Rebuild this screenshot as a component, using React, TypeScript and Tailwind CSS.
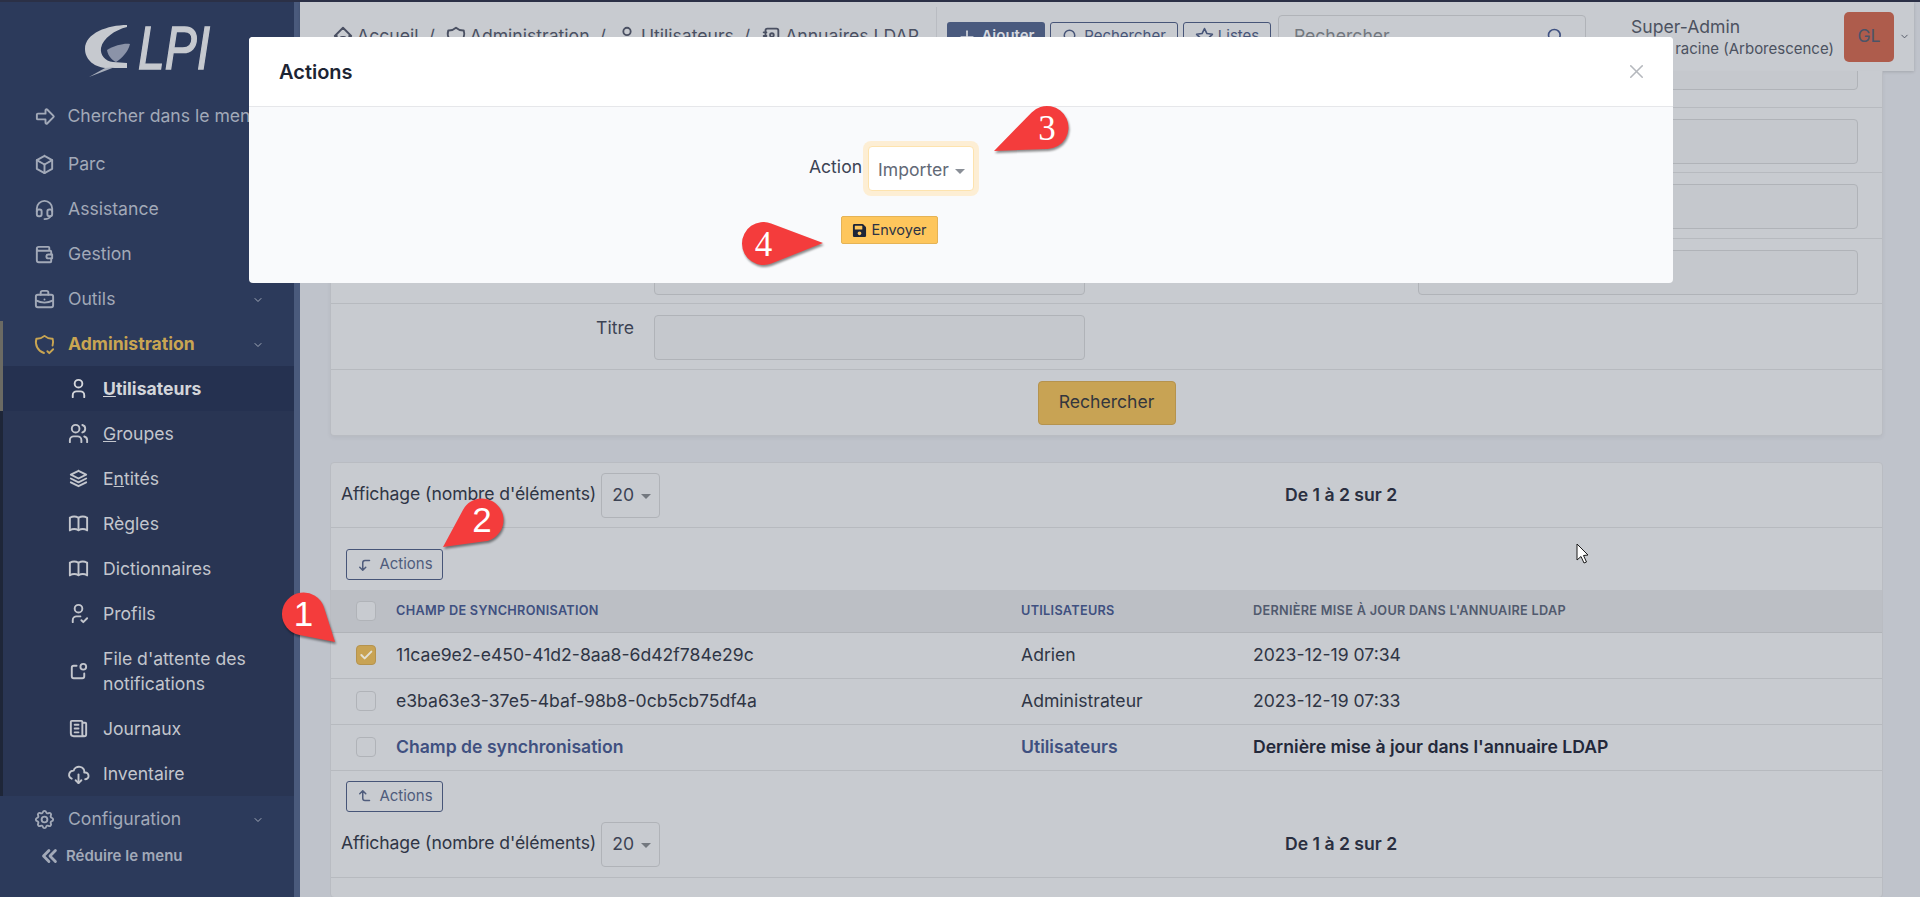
import React from 'react';
import {
  TbAddressBook,
  TbArrowBigRight,
  TbBook,
  TbBox,
  TbBriefcase,
  TbCheck,
  TbChevronDown,
  TbChevronsLeft,
  TbCloudDownload,
  TbCornerLeftDown,
  TbCornerLeftUp,
  TbHeadset,
  TbHome,
  TbNews,
  TbNotification,
  TbPlus,
  TbSearch,
  TbSettings,
  TbShieldCheck,
  TbStack2,
  TbStar,
  TbUser,
  TbUserCheck,
  TbUsers,
  TbWallet,
  TbX
} from 'react-icons/tb';
import { FaSave } from 'react-icons/fa';

type IconType = React.ComponentType<{ className?: string }>;

function Logo() {
  return (
    <svg
      viewBox="0 0 294 91"
      className="h-[91px] w-[294px] shrink-0">
      <path
        d="M127 23 C108 23 85 31 85 47 C85 58 95 66 108 66 L127 66 L127 61 L113 60 C105 59 100 53 101 46 C103 36 115 28 127 25 Z"
        fill="#c6c9cf"
      />
      <path
        d="M107 48 C115 43 125 41 130 42 C128 50 122 56 116 60 C112 58 108 54 107 48 Z"
        fill="#8b93a8"
      />
      <path
        d="M89 75 L115 65 L105 66 Z"
        fill="#a8aebb"
      />
      <text
        x="138"
        y="67"
        fontFamily="Liberation Sans, sans-serif"
        fontStyle="italic"
        fontSize="62"
        fill="#c6c9cf"
        stroke="#c6c9cf"
        strokeWidth="1.5"
        textLength="72"
        lengthAdjust="spacingAndGlyphs">
        LPI
      </text>
    </svg>
  );
}

function MenuItem({ icon: Icon, label, chevron, active }: { icon: IconType; label: string; chevron?: boolean; active?: boolean }) {
  return (
    <div className="flex h-[45px] items-center pl-[33px] pr-[30px] pt-[2px]">
      <Icon className={`size-[23px] shrink-0 ${active ? 'text-[#c9a552]' : 'text-[#a2a9b8]'}`} />
      <span className={`ml-[12px] flex-1 whitespace-nowrap ${active ? 'font-bold text-[#c9a552]' : 'text-[#a2a9b8]'}`}>{label}</span>
      {chevron && <TbChevronDown className="size-[12px] text-[#a2a9b8]" />}
    </div>
  );
}

function SubItem({
  icon: Icon,
  children,
  active,
  tall
}: {
  icon: IconType;
  children: React.ReactNode;
  active?: boolean;
  tall?: boolean;
}) {
  return (
    <div
      className={`flex items-center border-l-[3px] pl-[64px] pr-3 ${tall ? 'h-[70px]' : 'h-[45px]'} ${
        active ? 'border-[#6b6a63] bg-[#253150] font-bold text-[#d3d5da]' : 'border-[#1e2638] text-[#c3c6cd]'
      }`}>
      <Icon className="size-[23px] shrink-0" />
      <span className="ml-[13px] leading-[25px]">{children}</span>
    </div>
  );
}

function Sidebar() {
  return (
    <aside className="flex w-[300px] shrink-0 flex-col border-r-[6px] border-[#4a5a7c] bg-[#2c3a5b]">
      <Logo />
      <div className="flex h-[48px] items-center pb-[2px] pl-[34px]">
        <TbArrowBigRight className="size-[23px] text-[#a2a9b8]" />
        <span className="ml-[10.5px] whitespace-nowrap text-[#a2a9b8]">Chercher dans le menu</span>
      </div>
      <MenuItem
        icon={TbBox}
        label="Parc"
      />
      <MenuItem
        icon={TbHeadset}
        label="Assistance"
      />
      <MenuItem
        icon={TbWallet}
        label="Gestion"
      />
      <MenuItem
        icon={TbBriefcase}
        label="Outils"
        chevron
      />
      <div className="relative">
        <div className="absolute left-0 top-0 h-full w-[3px] bg-[#6b6a63]" />
        <MenuItem
          icon={TbShieldCheck}
          label="Administration"
          chevron
          active
        />
      </div>
      <div className="bg-[#293553]">
        <SubItem
          icon={TbUser}
          active>
          <span className="underline">U</span>tilisateurs
        </SubItem>
        <SubItem icon={TbUsers}>
          <span className="underline">G</span>roupes
        </SubItem>
        <SubItem icon={TbStack2}>
          E<span className="underline">n</span>tités
        </SubItem>
        <SubItem icon={TbBook}>Règles</SubItem>
        <SubItem icon={TbBook}>Dictionnaires</SubItem>
        <SubItem icon={TbUserCheck}>Profils</SubItem>
        <SubItem
          icon={TbNotification}
          tall>
          File d&apos;attente des notifications
        </SubItem>
        <SubItem icon={TbNews}>Journaux</SubItem>
        <SubItem icon={TbCloudDownload}>Inventaire</SubItem>
      </div>
      <MenuItem
        icon={TbSettings}
        label="Configuration"
        chevron
      />
      <div className="flex items-center pl-[37px] pt-[2px] text-[15px] font-semibold text-[#a2a9b8]">
        <TbChevronsLeft className="size-[26px] [&_path]:stroke-[2.6]" />
        <span className="ml-[3px]">Réduire le menu</span>
      </div>
    </aside>
  );
}

function Crumb({ icon: Icon, label }: { icon: IconType; label: string }) {
  return (
    <span className="flex items-center gap-[3px] whitespace-nowrap">
      <Icon className="size-[22px]" />
      {label}
    </span>
  );
}

function Header() {
  return (
    <header className="mr-[6px] flex h-[69px] shrink-0 items-center bg-[#c8cbd0] pl-[32px] shadow-[0_1px_3px_rgba(0,0,0,0.15)]">
      <nav className="flex w-[604px] items-center gap-[10px] text-[#4a5062]">
        <Crumb
          icon={TbHome}
          label="Accueil"
        />
        <span>/</span>
        <Crumb
          icon={TbShieldCheck}
          label="Administration"
        />
        <span>/</span>
        <Crumb
          icon={TbUser}
          label="Utilisateurs"
        />
        <span>/</span>
        <Crumb
          icon={TbAddressBook}
          label="Annuaires LDAP"
        />
      </nav>
      <div className="h-[60px] w-px bg-[#b9bcc2]" />
      <div className="ml-[10px] flex items-center gap-[5px] text-[15px]">
        <button className="flex h-[30px] w-[98px] items-center justify-center gap-1 rounded-[3px] bg-[#4a5a7e] font-semibold text-[#d5d8df]">
          <TbPlus className="size-[20px]" /> Ajouter
        </button>
        <button className="flex h-[30px] w-[128px] items-center justify-center gap-1 rounded-[3px] border border-[#475578] text-[#475578]">
          <TbSearch className="size-[18px]" /> Rechercher
        </button>
        <button className="flex h-[30px] w-[88px] items-center justify-center gap-1 rounded-[3px] border border-[#475578] text-[#475578]">
          <TbStar className="size-[19px]" /> Listes
        </button>
      </div>
      <div className="ml-[7px] flex h-[44px] w-[308px] items-center justify-between rounded-[4px] border border-[#b0b3b8] pl-[15px] pr-[19px] text-[#73787f]">
        Rechercher
        <TbSearch className="size-[20px] text-[#3f5080]" />
      </div>
      <div className="ml-[45px] w-[213px] whitespace-nowrap text-[#4c5260]">
        <div className="leading-[24px]">Super-Admin</div>
        <div className="text-[15px] leading-[20px]">Entité racine (Arborescence)</div>
      </div>
      <div className="flex size-[50px] items-center justify-center rounded-[5px] bg-[#ae5c4c] text-[#4b5468]">GL</div>
      <TbChevronDown className="ml-[5px] size-[11px] text-[#4c5260]" />
    </header>
  );
}

function Input({ width }: { width: string }) {
  return <div className={`h-[45px] shrink-0 rounded-[4px] border border-[#b0b3b8] bg-[#c5c8cd] ${width}`} />;
}

function FormRow({ height, label }: { height: string; label?: string }) {
  return (
    <div className={`flex border-b border-[#b7babf] ${height}`}>
      <div className="w-[303px] shrink-0 text-right leading-[26px] text-[#3c4354]">{label}</div>
      <div className="ml-[20px]">
        <Input width="w-[431px]" />
      </div>
      {!label && (
        <div className="ml-[333px]">
          <Input width="w-[440px]" />
        </div>
      )}
    </div>
  );
}

function SearchForm() {
  return (
    <section className="shrink-0 rounded-b-[4px] border-x border-b border-[#b9bcc2] bg-[#c8cbd0] shadow-[0_2px_4px_rgba(0,0,0,0.05)]">
      <div className="flex h-[37px] items-end justify-end overflow-hidden border-b border-[#b7babf] pb-[17px] pr-[24px]">
        <Input width="w-[440px]" />
      </div>
      <FormRow height="h-[65px] pt-[11px]" />
      <FormRow height="h-[66px] pt-[11px]" />
      <FormRow height="h-[65px] pt-[11px]" />
      <FormRow
        height="h-[66px] pt-[11px]"
        label="Titre"
      />
      <div className="flex h-[65px] items-center justify-center">
        <button className="h-[44px] w-[138px] rounded-[4px] border border-[#b5934e] bg-[#c8a354] text-[#33363d]">Rechercher</button>
      </div>
    </section>
  );
}

function PagerRow({ height }: { height: string }) {
  return (
    <div className={`flex items-center border-b border-[#b7babf] pl-[10px] ${height}`}>
      <div className="flex w-[944px] shrink-0 items-center text-[#2f3545]">
        <span className="-mt-[2px] tracking-[-0.1px]">Affichage (nombre d&apos;éléments)</span>
        <div className="ml-[5px] flex h-[45px] w-[59px] items-center rounded-[4px] border border-[#b0b3b8] pl-[10px] text-[#3c4354]">
          20
          <span className="ml-[7px] mt-[2px] border-x-[5px] border-t-[5px] border-x-transparent border-t-[#73787f]" />
        </div>
      </div>
      <span className="font-semibold text-[#2a2f40]">De 1 à 2 sur 2</span>
    </div>
  );
}

function ActionsButton({ up }: { up?: boolean }) {
  const Icon = up ? TbCornerLeftUp : TbCornerLeftDown;
  return (
    <button className="flex h-[31px] w-[97px] items-center justify-center gap-[5px] rounded-[3px] border border-[#475578] text-[15px] text-[#4f5c7c]">
      <Icon className="size-[18px]" /> Actions
    </button>
  );
}

function Checkbox({ checked }: { checked?: boolean }) {
  return (
    <div
      className={`flex size-[20px] items-center justify-center rounded-[4px] border ${
        checked ? 'border-[#b5934e] bg-[#c8a354]' : 'border-[#b0b3b8] bg-[#c8cbd0]'
      }`}>
      {checked && <TbCheck className="size-[16px] stroke-3 text-[#e3e1d6]" />}
    </div>
  );
}

const rows = [
  { id: '11cae9e2-e450-41d2-8aa8-6d42f784e29c', user: 'Adrien', date: '2023-12-19 07:34', checked: true },
  { id: 'e3ba63e3-37e5-4baf-98b8-0cb5cb75df4a', user: 'Administrateur', date: '2023-12-19 07:33' }
];

function LdapTable() {
  return (
    <table className="w-full table-fixed border-collapse text-left">
      <colgroup>
        <col className="w-[65px]" />
        <col className="w-[625px]" />
        <col className="w-[232px]" />
        <col />
      </colgroup>
      <thead>
        <tr className="h-[42px] border-b border-[#b0b3b8] bg-[#bcbfc5] text-[12.7px] font-semibold uppercase tracking-[0.3px]">
          <th className="pl-[25px] font-semibold">
            <Checkbox />
          </th>
          <th className="font-semibold text-[#3f5080]">Champ de synchronisation</th>
          <th className="font-semibold text-[#3f5080]">Utilisateurs</th>
          <th className="font-semibold text-[#515a6e]">Dernière mise à jour dans l&apos;annuaire LDAP</th>
        </tr>
      </thead>
      <tbody className="text-[#2f3545]">
        {rows.map((row) => (
          <tr
            key={row.id}
            className="h-[46px] border-b border-[#b7babf]">
            <td className="pl-[25px]">
              <Checkbox checked={row.checked} />
            </td>
            <td>{row.id}</td>
            <td>{row.user}</td>
            <td>{row.date}</td>
          </tr>
        ))}
        <tr className="h-[46px] border-b border-[#b7babf] font-semibold">
          <td className="pl-[25px]">
            <Checkbox />
          </td>
          <td className="text-[#3f5080]">Champ de synchronisation</td>
          <td className="text-[#3f5080]">Utilisateurs</td>
          <td className="text-[#23283a]">Dernière mise à jour dans l&apos;annuaire LDAP</td>
        </tr>
      </tbody>
    </table>
  );
}

function ResultCard() {
  return (
    <section className="mt-[26px] h-[436px] shrink-0 rounded-[4px] border border-[#b9bcc2] bg-[#c8cbd0]">
      <PagerRow height="h-[65px]" />
      <div className="h-[62px] pl-[15px] pt-[21px]">
        <ActionsButton />
      </div>
      <LdapTable />
      <div className="pl-[15px] pt-[10px]">
        <ActionsButton up />
      </div>
      <PagerRow height="h-[66px]" />
    </section>
  );
}

function ActionsModal() {
  return (
    <div className="absolute left-[249px] top-[35px] w-[1424px] overflow-hidden rounded-[4px] bg-[#f9fafc] text-[#3c4354]">
      <div className="flex h-[70px] items-center justify-between border-b border-[#e6e7ea] bg-white pl-[30px] pr-[25px]">
        <h2 className="text-[20px] font-semibold text-[#1d2433]">Actions</h2>
        <TbX className="size-[23px] text-[#b5b8bd] [&_path]:stroke-[1.6]" />
      </div>
      <div className="flex h-[176px] flex-col items-center">
        <div className="ml-[-134px] mt-[34px] flex items-start">
          <span className="mr-[1px] mt-[12px] leading-[28px]">Action</span>
          <div className="flex h-[55px] w-[116px] items-center rounded-[8px] bg-[#fdeed4] p-[5px]">
            <div className="flex size-full items-center rounded-[4px] border border-[#fde3ae] bg-white pl-[9px] pt-[3px] text-[#626976]">
              Importer
              <span className="ml-[6px] mt-[2px] border-x-[5px] border-t-[5px] border-x-transparent border-t-[#8a8f97]" />
            </div>
          </div>
        </div>
        <button className="ml-[-143px] mt-[20px] flex h-[28px] w-[97px] items-center justify-center gap-[4px] rounded-[2px] border border-[#e5b356] bg-[#fec65c] text-[14.5px] text-[#2c3345]">
          <FaSave className="size-[15px] text-[#1d2538]" /> Envoyer
        </button>
      </div>
    </div>
  );
}

const callouts = [
  { n: '1', cx: 303.5, cy: 614, tx: 335, ty: 642, serif: false },
  { n: '2', cx: 482, cy: 520, tx: 443, ty: 547, serif: false },
  { n: '3', cx: 1047, cy: 127.5, tx: 994, ty: 151, serif: true },
  { n: '4', cx: 763.5, cy: 243.5, tx: 823, ty: 243, serif: true }
];

function calloutPath(cx: number, cy: number, tx: number, ty: number, r: number) {
  const theta = Math.atan2(ty - cy, tx - cx);
  const spread = Math.acos(r / Math.hypot(tx - cx, ty - cy));
  const p1x = cx + r * Math.cos(theta + spread);
  const p1y = cy + r * Math.sin(theta + spread);
  const p2x = cx + r * Math.cos(theta - spread);
  const p2y = cy + r * Math.sin(theta - spread);
  return `M${tx} ${ty} L${p1x} ${p1y} A${r} ${r} 0 1 1 ${p2x} ${p2y} Z`;
}

function Annotations() {
  return (
    <svg
      viewBox="0 0 1920 897"
      className="pointer-events-none absolute -top-[2px] left-0 h-[897px] w-[1920px]">
      {callouts.map((c) => (
        <g key={c.n}>
          <path
            d={calloutPath(c.cx, c.cy, c.tx, c.ty, 21.5)}
            fill="#f43c3c"
            className="[filter:drop-shadow(1px_2px_1px_rgba(0,0,0,0.45))]"
          />
          <text
            x={c.cx}
            y={c.cy + 12}
            textAnchor="middle"
            fill="#ffffff"
            fontSize="35"
            fontFamily={c.serif ? 'Liberation Serif, serif' : 'Liberation Sans, sans-serif'}>
            {c.n}
          </text>
        </g>
      ))}
      {/* curseur */}
      <path
        d="M1577 544 L1577 560 L1581 556.5 L1584 563 L1586.5 562 L1583.5 555.5 L1588 555 Z"
        fill="#ffffff"
        stroke="#1a1a1a"
        strokeWidth="1"
      />
    </svg>
  );
}

export default function App() {
  return (
    <div className="relative flex h-[897px] w-full overflow-hidden border-t-2 border-[#2b3046] bg-[#bfc3cb] text-[17.6px] [font-family:Inter,sans-serif]">
      <Sidebar />
      <main className="flex min-w-0 flex-1 flex-col">
        <Header />
        <div className="flex flex-col pl-[30px] pr-[37px]">
          <SearchForm />
          <ResultCard />
        </div>
      </main>
      <ActionsModal />
      <Annotations />
    </div>
  );
}
